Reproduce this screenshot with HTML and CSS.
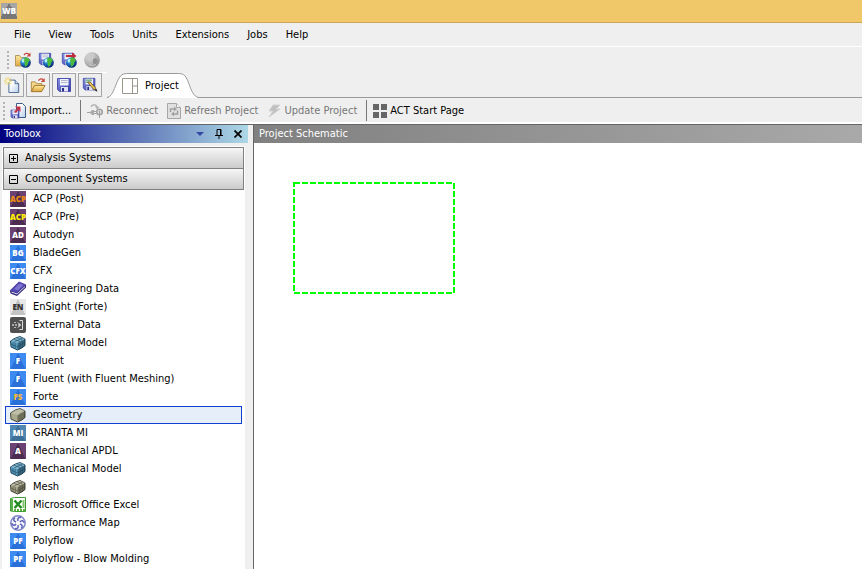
FILE: index.html
```html
<!DOCTYPE html>
<html lang="en">
<head>
<meta charset="utf-8">
<title>Workbench</title>
<link rel="stylesheet" href="styles.css">
</head>
<body>
<svg class="defs" aria-hidden="true">
  <defs>
    <radialGradient id="sea" cx=".35" cy=".3" r=".75"><stop offset="0" stop-color="#7fe0f4"/><stop offset=".5" stop-color="#1a6fc4"/><stop offset="1" stop-color="#06206c"/></radialGradient>
    <radialGradient id="ash" cx=".35" cy=".3" r=".8"><stop offset="0" stop-color="#dcdcdc"/><stop offset=".6" stop-color="#b0b0b0"/><stop offset="1" stop-color="#868686"/></radialGradient>
    <linearGradient id="disk" x2="1" y2="1"><stop offset="0" stop-color="#8c96e4"/><stop offset="1" stop-color="#3136a0"/></linearGradient>
    <linearGradient id="fold" x2="0" y2="1"><stop offset="0" stop-color="#fde9a0"/><stop offset="1" stop-color="#e0a63c"/></linearGradient>
    <linearGradient id="sheet" x2="1" y2="1"><stop offset=".3" stop-color="#fff"/><stop offset="1" stop-color="#b4cdec"/></linearGradient>
  </defs>
  <symbol id="floppy" viewBox="0 0 16 16">
    <path d="M1.500 1.500h13v13H3.500l-2-2z" fill="url(#disk)" stroke="#4a50ae"/>
    <path d="M4 2h8.500v6.500H4z" fill="#f4f6ff"/><path d="M5 3.500h6.500M5 5.500h6.500" stroke="#b0b6c4"/>
    <path d="M5 10h7v4.500H5z" fill="#dfe2f2"/><path d="M6 11h2v3.500H6z" fill="#2b2f86"/>
  </symbol>
  <symbol id="folder" viewBox="0 0 18 18">
    <path d="M1.500 16V5.500h4.500l1.500 2h6V10" fill="#f6d98a" stroke="#a9853a"/>
    <path d="M1.500 16.500l3.500-7h12l-4 7z" fill="url(#fold)" stroke="#966f28"/>
    <path d="M9.500 4c1.500-2.500 4-2.500 5.500-1" fill="none" stroke="#c8453c" stroke-width="1.400"/><path d="M16.500 1v4.500H12z" fill="#c8453c"/>
  </symbol>
  <symbol id="globe" viewBox="0 0 10 10">
    <circle cx="5" cy="5" r="4.800" fill="url(#sea)"/>
    <path d="M4.500.5C7 0 8.500 1.500 9 3L7.500 5 7 7 5 9 4 6.500 4.500 5 3 3.500z" fill="#4cb83c"/>
    <path d="M1.500 3.500l1-2 1.500.5-.5 2.500-1.500.5z" fill="#b5f2fa"/>
  </symbol>
  <symbol id="open-web" viewBox="0 0 16 16">
    <path d="M.5 14V3.500h4l1.500 2h5V14z" fill="url(#fold)" stroke="#b59a60"/>
    <path d="M9 3c1.500-2 3.500-2 5-.5" fill="none" stroke="#c8453c" stroke-width="1.300"/><path d="M15.500.5v4h-4z" fill="#c8453c"/>
    <use href="#globe" x="5" y="5" width="11" height="11"/>
  </symbol>
  <symbol id="save-web" viewBox="0 0 16 16"><use href="#floppy" width="14" height="14"/><use href="#globe" x="5" y="5" width="11" height="11"/></symbol>
  <symbol id="send-web" viewBox="0 0 16 16"><use href="#floppy" width="14" height="14"/><path d="M5 3h6V.5L15.500 4 11 7.500V5H5z" fill="#c02c38"/><use href="#globe" x="5" y="5" width="11" height="11"/></symbol>
  <symbol id="globe-off" viewBox="0 0 16 16"><circle cx="8" cy="8" r="7.800" fill="url(#ash)"/><path d="M3 3l5-2 3 2-2 3-4 1-3-1z" fill="#cacaca"/><path d="M9 7l3-1 2 3-3 4-2-2z" fill="#919191"/><path d="M5 12c2 2 5 2 7 0" fill="none" stroke="#d0d0d0"/></symbol>
  <symbol id="new" viewBox="0 0 18 18">
    <path d="M5.500 3.500h7l4 4v10h-11z" fill="url(#sheet)" stroke="#3d5c86"/><path d="M12.500 3.500v4h4" fill="#d8e6f6" stroke="#3d5c86"/>
    <path d="M4.500 0v9M0 4.500h9M1 1l7 7M8 1L1 8" stroke="#ecca4a"/><path d="M3 3h3v3H3z" fill="#fffbd0"/>
  </symbol>
  <symbol id="save-as" viewBox="0 0 18 18"><use href="#floppy" width="16" height="16"/><path d="M4 3.500h7M4 6h5" stroke="#3c9d48"/><path d="M6.500 6l2.500-.5 6.500 7-2 2z" fill="#f0c75c" stroke="#6d5728"/><path d="M14 15l2-2 1.500 3.500z" fill="#222"/></symbol>
  <symbol id="import" viewBox="0 0 16 16"><path d="M6.500.5h6l3 3v11h-9z" fill="url(#sheet)" stroke="#3d5c86"/><use href="#floppy" y="6" width="10" height="10"/><path d="M4 9l3-3.500L5 3.500h5.500V9L8.500 7 6 10z" fill="#c4364a"/></symbol>
  <symbol id="reconnect" viewBox="0 0 16 16"><path d="M4 4c1-3 5-3 6 0" fill="none" stroke="#b2b2b2" stroke-width="1.500"/><path d="M8 3.500h4.500L10 6.500z" fill="#b2b2b2"/><path d="M0 9.500h3M7 8.500h2M7 10.500h2M12.500 12v3" stroke="#a2a2a2"/><path d="M3 9l2-2h2v5H5l-2-2z" fill="#aaa"/><circle cx="12.500" cy="9" r="2.800" fill="#ddd" stroke="#a0a0a0" stroke-width="1.500"/><path d="M12.500 8v4" stroke="#a0a0a0"/></symbol>
  <symbol id="refresh" viewBox="0 0 14 16"><path d="M.5.5h9l4 4v11H.5z" fill="#e0e0e0" stroke="#a6a6a6"/><path d="M9.500.5v4h4" fill="#f4f4f4" stroke="#a6a6a6"/><path d="M3.500 9V6h4M10.500 7.500v3.500h-4" fill="none" stroke="#a0a0a0" stroke-width="1.500"/><path d="M7 3.500L10 6 7 8.500zM7 8.500v5L4 11z" fill="#a0a0a0"/></symbol>
  <symbol id="bolt" viewBox="0 0 14 16"><path d="M6 2h7L9 6h4L2 14l4-6H2z" fill="#c0c0c0" stroke="#d2d2d2"/></symbol>
  <symbol id="tiles" viewBox="0 0 14 14"><path d="M0 0h6v6H0zM8 0h6v6H8zM0 8h6v6H0zM8 8h6v6H8z" fill="#666"/></symbol>
  <symbol id="pane" viewBox="0 0 16 16"><path d="M.5.500h15v15H.5zM10.500.5v15M10.500 8h5" fill="none" stroke="#9b968a"/></symbol>
  <symbol id="book" viewBox="0 0 16 16"><path d="M0 9.500L9 1l7 3v2.500l-9 8.500-6.500-2.500z" fill="#2b2478"/><path d="M1.500 11.500L7 13.500 15 6V5l-8 7.500-5.500-2z" fill="#e9e9f4"/><path d="M0 9.500L9 .5l7 3L7 12z" fill="#5147ac"/><path d="M4 8l5.500-5.500 4 1.500L8 9.500z" fill="#7d74cf"/></symbol>
  <symbol id="ext-data" viewBox="0 0 16 16"><rect width="16" height="16" rx="2" fill="#505050"/><path d="M9.500 3.500h3v9h-3" fill="none" stroke="#ddd"/><path d="M2 8h8" stroke="#fff" stroke-dasharray="2 1"/><path d="M8 5.500L10.500 8 8 10.500" fill="none" stroke="#fff"/><path d="M4 5.500h2M4 10.500h2" stroke="#bbb"/></symbol>
  <symbol id="block" viewBox="0 0 16 16"><path d="M.5 6Q5 2.500 10 1.500l5 2.500V10.500Q12 13.500 7.500 15L1 12z" class="body"/><path d="M.8 6Q5 2.500 10 1.500l5 2.500Q11 5 7.500 8z" class="lid"/><path d="M7.500 8.500Q11 5.500 15 4.500v6Q12 13.500 7.500 14.800z" class="shade"/></symbol>
  <symbol id="mesh" viewBox="0 0 16 16"><use href="#block" width="16" height="16"/><path d="M1 9l6.500 3 7.500-4.500M3 7v6M5.200 8v6M10 7v7M12.500 6v6M3.500 4l6.500 2.500M6.500 2.500l6 2.500M4 7l8.500-4" fill="none" class="edge"/></symbol>
  <symbol id="excel" viewBox="0 0 16 16"><path d="M.5 1.500l4-1h11v14h-11l-4-.5z" fill="#fbfffa" stroke="#3f9d34"/><path d="M1 2h2v12H1z" fill="#5cb04c"/><path d="M4.500 3.500l7 7.500M11.500 3.500L4.500 11" stroke="#238a1f" stroke-width="2.500"/><path d="M4 13h11" stroke="#61af43" stroke-dasharray="2 1" stroke-width="2"/><path d="M13.500 3v8" stroke="#7fc16d" stroke-width="2"/></symbol>
  <symbol id="fan" viewBox="0 0 16 16"><circle cx="8" cy="8" r="7.200" fill="#f3f4fd" stroke="#7f85c9" stroke-width="1.500"/><g fill="none" stroke="#5a61b4" stroke-width="1.500"><path id="blade" d="M8 6C7 3 9 2 11 2.500"/><use href="#blade" transform="rotate(60 8 8)"/><use href="#blade" transform="rotate(120 8 8)"/><use href="#blade" transform="rotate(180 8 8)"/><use href="#blade" transform="rotate(240 8 8)"/><use href="#blade" transform="rotate(300 8 8)"/></g><circle cx="8" cy="8" r="2" fill="#fff"/></symbol>
  <symbol id="pin" viewBox="0 0 8 10"><path d="M2 6V.5h4V6M5.500 1v5M0 6.500h8M4 7v3" fill="none" stroke="#000"/></symbol>
  <symbol id="close" viewBox="0 0 8 8"><path d="M.5.5l7 7M7.500.5l-7 7" stroke="#000" stroke-width="1.700"/></symbol>
  <symbol id="plus" viewBox="0 0 9 9"><path d="M.5.500h8v8h-8zM2 4.500h5M4.500 2v5" fill="none" stroke="#000"/></symbol>
  <symbol id="minus" viewBox="0 0 9 9"><path d="M.5.500h8v8h-8zM2 4.500h5" fill="none" stroke="#000"/></symbol>
</svg>

<header class="title-bar"><span class="badge app">WB</span></header>
<nav class="menu-bar">
  <button>File</button><button>View</button><button>Tools</button><button>Units</button><button>Extensions</button><button>Jobs</button><button>Help</button>
</nav>
<div class="web-bar">
  <span class="grip"></span>
  <button aria-label="Open from web"><svg class="i16"><use href="#open-web"/></svg></button>
  <button aria-label="Save to web"><svg class="i16"><use href="#save-web"/></svg></button>
  <button aria-label="Send to web"><svg class="i16"><use href="#send-web"/></svg></button>
  <button aria-label="Web status" disabled><svg class="i16"><use href="#globe-off"/></svg></button>
</div>
<div class="tab-bar">
  <div class="file-tools">
    <button aria-label="New"><svg class="i16"><use href="#new"/></svg></button>
    <button aria-label="Open"><svg class="i16"><use href="#folder"/></svg></button>
    <button aria-label="Save"><svg class="i16"><use href="#floppy"/></svg></button>
    <button aria-label="Save as"><svg class="i16"><use href="#save-as"/></svg></button>
  </div>
  <button class="tab">
    <svg class="tab-shape" viewBox="0 0 94 25" preserveAspectRatio="none"><path d="M0 25C7 24 9 8 14 3Q16 .5 20 .5H74Q80 .5 82 5C86 12 87 22 94 24.500V25z" fill="#fff"/><path d="M0 24.500C7 24 9 8 14 3Q16 .5 20 .5H74Q80 .5 82 5C86 12 87 22 94 24.500" fill="none" stroke="#999"/></svg>
    <svg class="i16"><use href="#pane"/></svg><span>Project</span>
  </button>
</div>
<div class="action-bar">
  <span class="grip"></span>
  <button><svg class="i16"><use href="#import"/></svg>Import...</button>
  <span class="rule"></span>
  <button disabled><svg class="i16"><use href="#reconnect"/></svg>Reconnect</button>
  <button disabled><svg class="i14"><use href="#refresh"/></svg>Refresh Project</button>
  <button disabled><svg class="i14"><use href="#bolt"/></svg>Update Project</button>
  <span class="rule"></span>
  <button><svg class="i14"><use href="#tiles"/></svg>ACT Start Page</button>
</div>
<main class="workspace">
  <aside class="toolbox">
    <div class="panel-head blue"><h2>Toolbox</h2>
      <button class="drop" aria-label="Options"></button>
      <button aria-label="Pin"><svg class="pin"><use href="#pin"/></svg></button>
      <button aria-label="Close"><svg class="close"><use href="#close"/></svg></button>
    </div>
    <div class="panel-body">
      <button class="group"><svg class="i9"><use href="#plus"/></svg>Analysis Systems</button>
      <button class="group"><svg class="i9"><use href="#minus"/></svg>Component Systems</button>
      <ul class="systems">
        <li><button><span class="badge purple orange-ink">ACP</span>ACP (Post)</button></li>
        <li><button><span class="badge purple yellow-ink">ACP</span>ACP (Pre)</button></li>
        <li><button><span class="badge purple">AD</span>Autodyn</button></li>
        <li><button><span class="badge azure">BG</span>BladeGen</button></li>
        <li><button><span class="badge azure">CFX</span>CFX</button></li>
        <li><button><svg class="i16"><use href="#book"/></svg>Engineering Data</button></li>
        <li><button><span class="badge silver">EN</span>EnSight (Forte)</button></li>
        <li><button><svg class="i16"><use href="#ext-data"/></svg>External Data</button></li>
        <li><button><svg class="i16 teal"><use href="#mesh"/></svg>External Model</button></li>
        <li><button><span class="badge azure">F</span>Fluent</button></li>
        <li><button><span class="badge azure">F</span>Fluent (with Fluent Meshing)</button></li>
        <li><button><span class="badge azure gold-ink">FS</span>Forte</button></li>
        <li><button class="selected"><svg class="i16 khaki"><use href="#block"/></svg>Geometry</button></li>
        <li><button><span class="badge steel">MI</span>GRANTA MI</button></li>
        <li><button><span class="badge purple">A</span>Mechanical APDL</button></li>
        <li><button><svg class="i16 teal"><use href="#mesh"/></svg>Mechanical Model</button></li>
        <li><button><svg class="i16 khaki"><use href="#mesh"/></svg>Mesh</button></li>
        <li><button><svg class="i16"><use href="#excel"/></svg>Microsoft Office Excel</button></li>
        <li><button><svg class="i16"><use href="#fan"/></svg>Performance Map</button></li>
        <li><button><span class="badge azure">PF</span>Polyflow</button></li>
        <li><button><span class="badge azure">PF</span>Polyflow - Blow Molding</button></li>
      </ul>
    </div>
  </aside>
  <section class="schematic">
    <div class="panel-head gray"><h2>Project Schematic</h2></div>
    <div class="canvas"><svg class="drop-zone"><rect x="1" y="1" width="160" height="110" fill="none" stroke="#0f0" stroke-width="2" stroke-dasharray="6 2"/></svg></div>
  </section>
</main>
</body>
</html>
```
FILE: styles.css
```css
* { box-sizing: border-box; }
body {
  margin: 0;
  height: 100vh;
  overflow: hidden;
  display: flex;
  flex-direction: column;
  background: #efefef;
  color: #000;
  font: 11px/16px "DejaVu Sans Condensed", "Noto Sans", sans-serif;
}
button {
  display: flex;
  align-items: center;
  padding: 0;
  border: 0;
  background: none;
  color: inherit;
  font: inherit;
  white-space: nowrap;
}
button:disabled { color: #777; }
svg { display: block; flex: none; }
.defs { position: absolute; width: 0; height: 0; }
.i9 { width: 9px; height: 9px; }
.i14 { width: 14px; height: 16px; }
.i16 { width: 16px; height: 16px; }

.title-bar { flex: none; height: 23px; padding: 3px 1px; background: #f0c869; border-bottom: 1px solid #cba557; }
.menu-bar { flex: none; height: 24px; display: flex; gap: 18px; padding: 1px 14px 0; border-bottom: 1px solid #fff; }
.web-bar { flex: none; height: 25px; display: flex; align-items: center; gap: 7px; padding-left: 7px; }
.grip { width: 2px; height: 18px; background: repeating-linear-gradient(#b4b4b4 0 2px, transparent 2px 4px); }
.web-bar .grip { margin-right: -1px; }

.tab-bar { flex: none; height: 26px; display: flex; align-items: flex-end; box-shadow: inset 0 -1px #999; }
.file-tools { display: flex; gap: 2px; width: 107px; height: 26px; padding-bottom: 1px; border-top: 1px solid #fff; background: #efefef; }
.file-tools button { width: 24px; height: 24px; justify-content: center; border: 1px solid #a6a6a6; }
.tab { position: relative; width: 91px; height: 25px; padding-left: 15px; gap: 7px; }
.tab > * { position: relative; }
.tab .tab-shape { position: absolute; left: 0; top: 0; width: 100%; height: 100%; }

.action-bar { flex: none; height: 26px; display: flex; align-items: center; gap: 9px; padding: 1px 0 0 3px; border-bottom: 2px solid #fff; }
.action-bar .grip { margin-right: -4px; }
.action-bar button { gap: 3px; }
.rule { width: 1px; height: 21px; background: #777; }
.action-bar .rule + button { margin-left: -3px; }

.workspace { flex: 1; min-height: 0; display: flex; gap: 5px; border-top: 1px solid #666; }
.toolbox { flex: none; width: 248px; display: flex; flex-direction: column; }
.panel-head { flex: none; height: 18px; display: flex; align-items: center; gap: 11px; padding: 0 6px 0 4px; color: #fff; }
.panel-head h2 { flex: 1; margin: 0; font: inherit; line-height: 18px; }
.blue { background: linear-gradient(90deg, #000080, #add8e6); }
.gray { background: linear-gradient(90deg, #808080, #a9a9a9); padding-left: 5px; }
.drop { border: solid transparent; border-width: 4px 4px 0; border-top-color: #3549a4; }
.pin { width: 8px; height: 10px; }
.close { width: 8px; height: 8px; }
.panel-body { flex: 1; min-height: 0; margin: 3px 3px 0 2px; padding: 1px 1px 0; background: #fff; }
.group { width: 241px; height: 22px; padding-left: 5px; gap: 7px; border: 1px solid #808080; background: linear-gradient(#f6f6f6, #cbcbcb); }
.group + .group { margin-top: -1px; }
.systems { list-style: none; margin: 0 2px; padding: 0; }
.systems button { width: 100%; height: 18px; padding-left: 5px; gap: 7px; }
.systems .selected { height: 18px; padding-left: 4px; border: 1px solid #1040d0; background: #e5eef9; }

.badge { display: flex; flex: none; align-items: center; justify-content: center; width: 16px; height: 16px; overflow: hidden; color: #fff; font: 800 8px/16px "Open Sans", sans-serif; }
.app { background: conic-gradient(from 150deg at 50% 0, #777 60deg, #a6a6a6 0); }
.purple { background: conic-gradient(from 155deg at 50% 0, #4c2c50 50deg, #6c4273 0); }
.azure { background: conic-gradient(from 155deg at 50% 0, #2b70d8 50deg, #3d8af0 0); }
.steel { background: conic-gradient(from 155deg at 50% 0, #3d7099 50deg, #5088b2 0); }
.silver { background: conic-gradient(from 155deg at 50% 0, #c4c4c4 50deg, #e8e8e8 0); color: #333; }
.orange-ink { color: #e88a14; }
.yellow-ink { color: #fff000; }
.gold-ink { color: #f5b93d; }
.teal { fill: #5b9fc0; stroke: #1d4a62; }
.khaki { fill: #a9a98c; stroke: #47473a; }
.body { stroke-width: 1px; }
.lid { fill: #fff; fill-opacity: .25; stroke: none; }
.shade { fill: #000; fill-opacity: .35; stroke: none; }
.edge { stroke-width: 1px; stroke-opacity: .6; }

.schematic { flex: 1; min-width: 0; display: flex; flex-direction: column; border-left: 1px solid #666; }
.canvas { flex: 1; padding: 39px; background: #fff; }
.drop-zone { width: 162px; height: 112px; }
```
